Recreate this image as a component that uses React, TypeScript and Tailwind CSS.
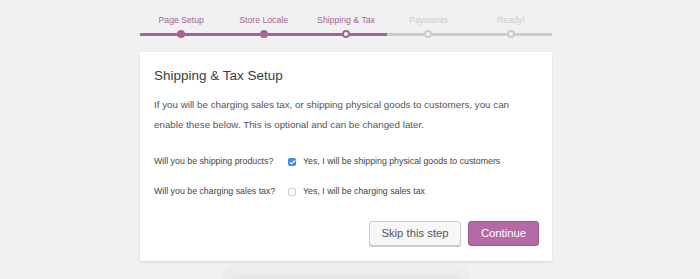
import { Check } from "lucide-react";

type Step = { label: string; state: "done" | "active" | "todo" };

const steps: Step[] = [
  { label: "Page Setup", state: "done" },
  { label: "Store Locale", state: "done" },
  { label: "Shipping & Tax", state: "active" },
  { label: "Payments", state: "todo" },
  { label: "Ready!", state: "todo" },
];

function StepItem({ step }: { step: Step }) {
  const lit = step.state !== "todo";
  return (
    <li className="relative flex flex-1 flex-col items-center">
      <span
        className={`h-[26px] pt-[15px] text-[8.7px] leading-[11px] ${
          lit ? "text-[#a46497]" : "text-[#cccccc]"
        }`}
      >
        {step.label}
      </span>
      <span
        className={`mt-[7px] h-[3px] w-full ${lit ? "bg-[#a46497]" : "bg-[#cccccc]"}`}
      />
      <span
        className={`absolute left-1/2 top-[30px] h-[8px] w-[8px] -translate-x-1/2 rounded-full border-2 ${
          step.state === "done"
            ? "border-[#a46497] bg-[#a46497]"
            : step.state === "active"
              ? "border-[#a46497] bg-white"
              : "border-[#cccccc] bg-[#f1f1f1]"
        }`}
      />
    </li>
  );
}

function Option({
  question,
  answer,
  checked,
}: {
  question: string;
  answer: string;
  checked: boolean;
}) {
  return (
    <div className="flex h-[30px] items-center text-[8.8px] text-[#444]">
      <span className="w-[134px]">{question}</span>
      <span
        className={`mr-[7px] flex h-[8px] w-[8px] items-center justify-center rounded-[2px] ${
          checked ? "bg-[#3b86f0]" : "border border-[#cfcfcf] bg-white"
        }`}
      >
        {checked && <Check className="h-[7px] w-[7px] text-white" strokeWidth={4} />}
      </span>
      <span>{answer}</span>
    </div>
  );
}

export default function App() {
  return (
    <div
      className="h-[279px] w-[700px] overflow-hidden bg-[#f1f1f1]"
      style={{ fontFamily: '"Liberation Sans", Arial, sans-serif' }}
    >
      <div className="ml-[140px] w-[412px]">
        <ol className="flex">
          {steps.map((s) => (
            <StepItem key={s.label} step={s} />
          ))}
        </ol>

        <section className="mt-[16px] bg-white pb-[15px] pl-[14px] pr-[13px] pt-[16px] shadow-[0_1px_2px_rgba(0,0,0,0.12)]">
          <h1 className="text-[13.5px] leading-[16px] text-[#3c3c3c]">Shipping &amp; Tax Setup</h1>
          <p className="mt-[11px] text-[9.8px] leading-[19.5px] text-[#555]">
            If you will be charging sales tax, or shipping physical goods to customers, you can
            enable these below. This is optional and can be changed later.
          </p>

          <div className="mt-[13px]">
            <Option
              question="Will you be shipping products?"
              answer="Yes, I will be shipping physical goods to customers"
              checked
            />
            <Option
              question="Will you be charging sales tax?"
              answer="Yes, I will be charging sales tax"
              checked={false}
            />
          </div>

          <div className="mt-[14px] flex justify-end gap-[7px]">
            <button className="h-[25px] w-[92px] rounded-[3px] border border-[#cccccc] bg-[#f7f7f7] text-[11.3px] text-[#555] shadow-[0_1px_0_#ccc]">
              Skip this step
            </button>
            <button className="h-[25px] w-[71px] rounded-[3px] border border-[#9a5a8e] bg-[#b36aa7] text-[11.3px] text-white">
              Continue
            </button>
          </div>
        </section>
      </div>

      <div className="ml-[222px] mt-[4px] w-[248px] rounded-t-[14px] bg-[#ededed] px-[8px] pt-[9px]">
        <div className="h-[12px] rounded-t-[8px] bg-[#e8e8e8]" />
      </div>
    </div>
  );
}
